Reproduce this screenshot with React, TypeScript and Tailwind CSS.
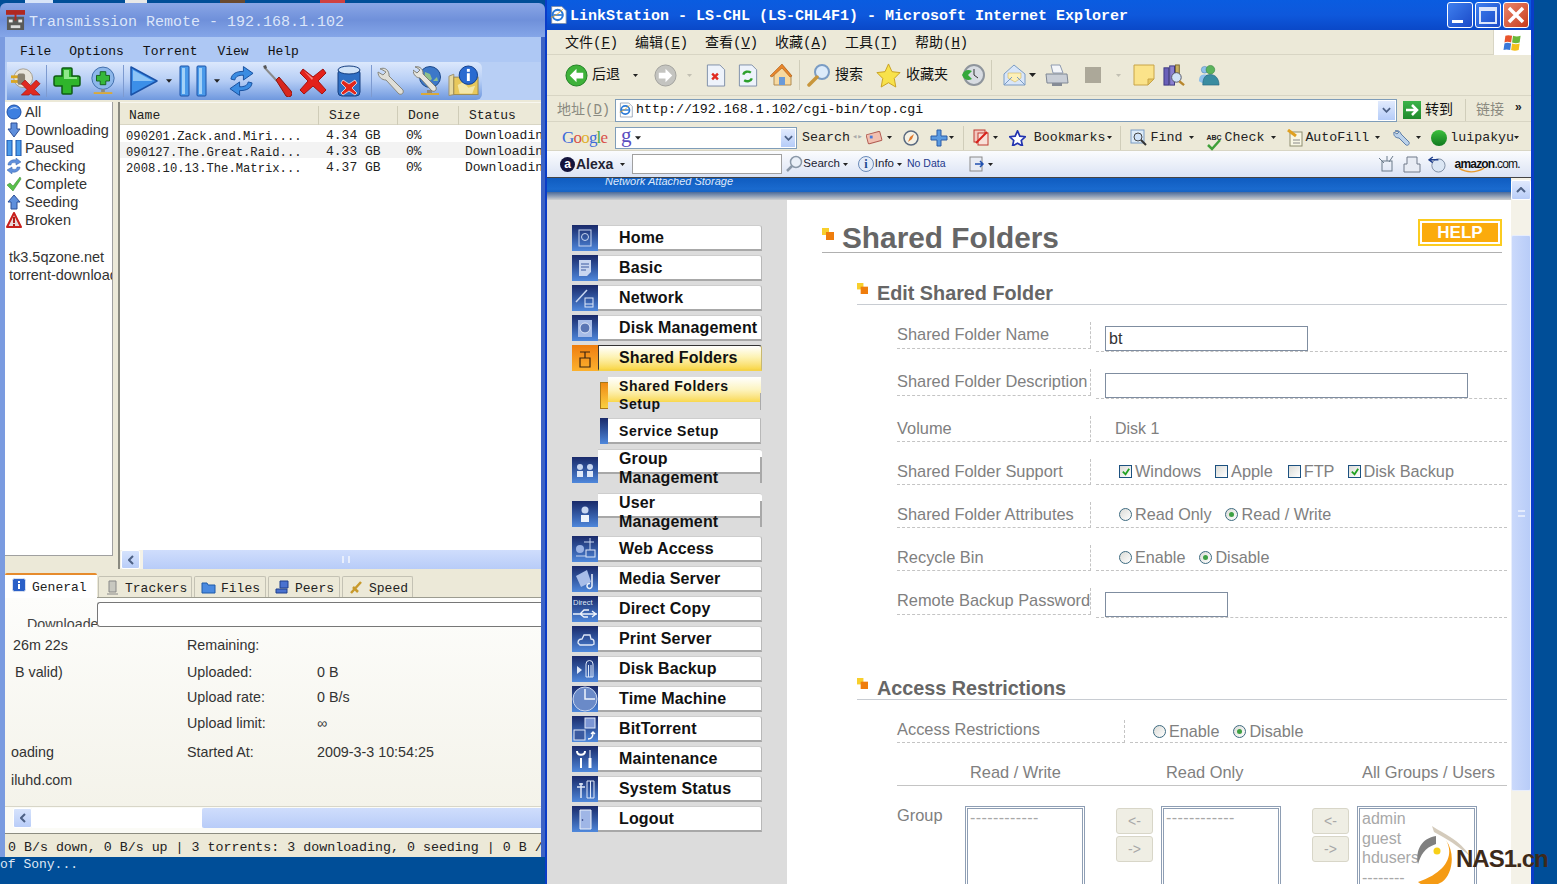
import React from 'react';

const MONO = "font-['Liberation_Mono','Noto_Sans_CJK_SC',monospace]";
const SANS = "font-['Liberation_Sans',sans-serif]";

type P = { className?: string };

// ---- left window toolbar icons ----
const Disconnect = ({ className }: P) => (
  <svg viewBox="0 0 34 32" className={className}>
    <circle cx="14" cy="13" r="10" fill="#e8e4da" stroke="#a39c8c" />
    <rect x="1" y="10" width="9" height="3" fill="#d9a520" />
    <rect x="1" y="15" width="9" height="3" fill="#d9a520" />
    <rect x="8" y="8" width="8" height="12" rx="2" fill="#8a8271" />
    <path d="M16 18l6 6 6-6 4 4-6 6 6 6h-8l-2-2-2 2h-8l6-6-6-6z" fill="#e02a20" stroke="#9c1410" strokeWidth="0.7" transform="translate(0 -3)" />
  </svg>
);
const GreenPlus = ({ className }: P) => (
  <svg viewBox="0 0 28 30" className={className}>
    <path d="M10 2h8a1 1 0 0 1 1 1v7h6a2 2 0 0 1 2 2v6a2 2 0 0 1-2 2h-6v7a1 1 0 0 1-1 1h-8a1 1 0 0 1-1-1v-7H3a2 2 0 0 1-2-2v-6a2 2 0 0 1 2-2h6V3a1 1 0 0 1 1-1z" fill="#2fb52b" stroke="#0f5c14" strokeWidth="1.5" />
    <path d="M11 4h5v7h8v2H11z" fill="#8fe88a" />
  </svg>
);
const GlobePlus = ({ className }: P) => (
  <svg viewBox="0 0 28 32" className={className}>
    <circle cx="14" cy="13" r="12" fill="#8db7ea" stroke="#3d6aa8" />
    <path d="M11 6h6v4h4v6h-4v4h-6v-4H7v-6h4z" fill="#36b83a" stroke="#125f18" />
    <rect x="12" y="25" width="4" height="3" fill="#8a8a80" />
    <rect x="4" y="28" width="20" height="2" fill="#d9a93a" />
  </svg>
);
const Play = ({ className }: P) => (
  <svg viewBox="0 0 28 32" className={className}>
    <path d="M1 2l26 14L1 30z" fill="#3c8fe8" stroke="#1a52a8" strokeWidth="1.5" strokeLinejoin="round" />
    <path d="M3 5l20 11L3 16z" fill="#8cc4f6" />
  </svg>
);
const Pause = ({ className }: P) => (
  <svg viewBox="0 0 28 32" className={className}>
    <rect x="1" y="1" width="9" height="30" rx="1" fill="#4a9aea" stroke="#1a52a8" />
    <rect x="18" y="1" width="9" height="30" rx="1" fill="#4a9aea" stroke="#1a52a8" />
    <rect x="3" y="3" width="3" height="26" fill="#a3d2f8" />
    <rect x="20" y="3" width="3" height="26" fill="#a3d2f8" />
  </svg>
);
const Refresh = ({ className }: P) => (
  <svg viewBox="0 0 26 32" className={className}>
    <path d="M2 14C3 8 8 6 15 6V1l10 7-10 7v-5c-5 0-8 1-9 5z" fill="#3a8ce2" stroke="#174f9e" strokeLinejoin="round" />
    <path d="M24 18c-1 6-6 8-13 8v5L1 24l10-7v5c5 0 8-1 9-5z" fill="#3a8ce2" stroke="#174f9e" strokeLinejoin="round" />
  </svg>
);
const Screwdriver = ({ className }: P) => (
  <svg viewBox="0 0 30 32" className={className}>
    <path d="M2 2l13 14" stroke="#8a8a8a" strokeWidth="2" />
    <path d="M1 1l3-1 1 3-2 1z" fill="#555" />
    <path d="M14 15l3-3 12 14a3.5 3.5 0 0 1-5 5z" fill="#d8281e" stroke="#8a1510" />
  </svg>
);
const RedX = ({ className }: P) => (
  <svg viewBox="0 0 28 30" className={className}>
    <path d="M4 3l10 8 10-8 3 4-8 8 8 9-4 4-9-8-9 8-4-4 8-9-8-8z" fill="#e3211a" stroke="#a01512" strokeLinejoin="round" />
    <path d="M5 5l9 7 -1 2z" fill="#f7847e" />
  </svg>
);
const TrashBlue = ({ className }: P) => (
  <svg viewBox="0 0 24 32" className={className}>
    <rect x="1" y="4" width="22" height="27" rx="4" fill="#2f6fc4" stroke="#163f80" />
    <ellipse cx="12" cy="5" rx="11" ry="4" fill="#cfe2f8" stroke="#163f80" />
    <path d="M6 15l6 4 6-4 2 3-5 5 5 5-2 2-6-4-6 4-2-2 5-5-5-5z" fill="#e3261c" stroke="#fff" strokeWidth="0.7" />
  </svg>
);
const Wrench = ({ className }: P) => (
  <svg viewBox="0 0 28 30" className={className}>
    <path d="M3 3c4-2 8 0 9 5l0 2 14 14c1 3-1 5-4 4L9 14C5 14 1 11 1 6l5 3 3-3-5-3z" fill="#e0dfd8" stroke="#87877e" />
  </svg>
);
const GlobeWrench = ({ className }: P) => (
  <svg viewBox="0 0 28 32" className={className}>
    <circle cx="17" cy="12" r="10.5" fill="#3d78c8" stroke="#1d4a8c" />
    <path d="M12 7l5 2 2 5-4 3-4-3zM20 16l4-4 1 4z" fill="#8fc08a" />
    <rect x="14" y="25" width="5" height="3" fill="#888" />
    <rect x="8" y="28" width="18" height="2" fill="#d9a93a" />
    <path d="M2 2c4-1 7 1 8 5l0 2 13 13c1 3-1 5-4 4L7 13C4 13 0 10 0 5l4 3 3-3-4-3z" fill="#e6e5de" stroke="#7e7e75" />
  </svg>
);
const InfoMap = ({ className }: P) => (
  <svg viewBox="0 0 32 32" className={className}>
    <path d="M1 11l5-2v21l-5 1z" fill="#e6d9a0" stroke="#9c9170" />
    <rect x="6" y="12" width="25" height="18" fill="#e8c85c" stroke="#9c8a50" />
    <path d="M10 20l6-3 5 6 7-2-3 8H12z" fill="#f3e7aa" />
    <circle cx="21" cy="10" r="9.5" fill="#2a6ad0" stroke="#123f8c" />
    <rect x="19.5" y="3.5" width="3" height="3" fill="#fff" />
    <rect x="19.5" y="8" width="3" height="8" fill="#fff" />
  </svg>
);
const TinyArrow = ({ className }: P) => (
  <svg viewBox="0 0 7 4" className={className}>
    <path d="M0 0h7L3.5 4z" fill="#222" />
  </svg>
);

// ---- filter list icons ----
const FAll = () => (
  <svg viewBox="0 0 16 16" className="w-[16px] h-[16px]"><circle cx="8" cy="8" r="7" fill="#3d7fe0" stroke="#1d4fa6" /><path d="M3 6c2-3 7-4 10-1-3-1-7-1-10 1z" fill="#d8e8fb" /></svg>
);
const FDown = () => (
  <svg viewBox="0 0 16 16" className="w-[16px] h-[16px]"><path d="M5 1h6v6h3l-6 8-6-8h3z" fill="#5f8fdc" stroke="#2d4f96" /></svg>
);
const FPause = () => (
  <svg viewBox="0 0 16 16" className="w-[16px] h-[16px]"><rect x="1" y="0" width="5" height="16" fill="#4a9aea" stroke="#1a52a8" /><rect x="10" y="0" width="5" height="16" fill="#4a9aea" stroke="#1a52a8" /></svg>
);
const FCheck = () => (
  <svg viewBox="0 0 16 16" className="w-[16px] h-[16px]"><path d="M2 7c0-4 5-6 8-5V0l5 4-5 3V5C7 4 5 5 5 7zM14 9c0 4-5 6-8 5v2l-5-4 5-3v2c3 1 5 0 5-2z" fill="#5f8fdc" stroke="#3a66ad" strokeWidth="0.5" /></svg>
);
const FOk = () => (
  <svg viewBox="0 0 16 16" className="w-[16px] h-[16px]"><path d="M1 9l3-2 3 3 7-9 1 2-8 12z" fill="#58c04a" stroke="#2f7f28" strokeWidth="0.5" /></svg>
);
const FUp = () => (
  <svg viewBox="0 0 16 16" className="w-[16px] h-[16px]"><path d="M8 1l6 7h-3v7H5V8H2z" fill="#5f8fdc" stroke="#2d4f96" /></svg>
);
const FBroken = () => (
  <svg viewBox="0 0 16 16" className="w-[16px] h-[16px]"><path d="M8 1l7 14H1z" fill="#e8d8d8" stroke="#c8201c" strokeWidth="2" strokeLinejoin="round" /><rect x="7" y="5" width="2" height="6" fill="#b01c18" /><rect x="7" y="12" width="2" height="2" fill="#b01c18" /></svg>
);

// ---- ie toolbar icons ----
const XpBtn = ({ dir, gray }: { dir: 'l' | 'r'; gray?: boolean }) => (
  <svg viewBox="0 0 24 24" className="w-[23px] h-[23px]">
    <circle cx="12" cy="12" r="11" fill={gray ? '#c4c4c0' : '#3fb23a'} stroke={gray ? '#a0a09c' : '#1f7f22'} />
    <path d={dir === 'l' ? 'M12 5l-7 7 7 7v-4h7V9h-7z' : 'M12 5l7 7-7 7v-4H5V9h7z'} fill="#fff" />
  </svg>
);
const PageIcon = ({ children }: { children: React.ReactNode }) => (
  <svg viewBox="0 0 20 24" className="w-[20px] h-[23px]">
    <path d="M1 1h13l5 5v17H1z" fill="#eef3fb" stroke="#7d8ea8" />
    {children}
  </svg>
);
const Home = () => (
  <svg viewBox="0 0 24 24" className="w-[24px] h-[24px]">
    <path d="M3 12L13 2l9 10v10H5V12z" fill="#f7d9a0" stroke="#b08a50" />
    <path d="M1 13L13 1l10 12-2 1-8-9-10 9z" fill="#e8862c" stroke="#a85a14" strokeWidth="0.6" />
    <rect x="10" y="14" width="6" height="8" fill="#6a9ad8" />
  </svg>
);
const Magnifier = () => (
  <svg viewBox="0 0 24 24" className="w-[24px] h-[24px]">
    <circle cx="15" cy="9" r="7" fill="#dcebfa" stroke="#7a9cc4" strokeWidth="2" />
    <path d="M10 14l-8 8" stroke="#c8963c" strokeWidth="3.5" strokeLinecap="round" />
  </svg>
);
const Star = () => (
  <svg viewBox="0 0 26 26" className="w-[25px] h-[25px]">
    <path d="M13 1l3.6 8 8.4 1-6 6 1.6 9L13 20.5 5.400 25 7 16l-6-6 8.400-1z" fill="#f8e24a" stroke="#c8a020" />
  </svg>
);
const History = () => (
  <svg viewBox="0 0 24 24" className="w-[24px] h-[24px]">
    <circle cx="13" cy="12" r="10" fill="#d8dce2" stroke="#8f959c" strokeWidth="2" />
    <path d="M13 6v6l4 3" stroke="#333" fill="none" />
    <path d="M1 12c2-5 6-6 10-4l-4 4 4 4c-4 2-8 1-10-4z" fill="#35a83a" />
  </svg>
);
const Mail = () => (
  <svg viewBox="0 0 23 24" className="w-[23px] h-[24px]">
    <path d="M1 11l10-9 11 9v11H1z" fill="#d9e6f8" stroke="#7a9cc4" />
    <path d="M5 10h13v5l-6 4-7-4z" fill="#fdf0b8" stroke="#c8a84a" strokeWidth="0.5" />
    <path d="M1 22l8-8M22 22l-8-8" stroke="#7a9cc4" />
  </svg>
);
const Printer = () => (
  <svg viewBox="0 0 24 24" className="w-[24px] h-[24px]">
    <path d="M6 2h9l3 8H8z" fill="#f4f6fa" stroke="#8e9ab0" />
    <path d="M1 11h21l1 9H2z" fill="#c9ced6" stroke="#7f8794" />
    <rect x="7" y="20" width="10" height="3" fill="#868c96" />
  </svg>
);
const Note = () => (
  <svg viewBox="0 0 22 22" className="w-[22px] h-[22px]">
    <path d="M1 1h20v14l-6 6H1z" fill="#fbe38a" stroke="#c8a448" />
    <path d="M21 15h-6v6z" fill="#e8c860" stroke="#c8a448" />
  </svg>
);
const Research = () => (
  <svg viewBox="0 0 24 24" className="w-[23px] h-[23px]">
    <rect x="1" y="4" width="5" height="18" fill="#6a60b8" stroke="#3d3780" />
    <rect x="7" y="2" width="5" height="20" fill="#8a80d0" stroke="#3d3780" />
    <rect x="13" y="1" width="4" height="14" fill="#c8b060" stroke="#7a6830" />
    <circle cx="14" cy="14" r="5" fill="#cfe2f8" stroke="#556" />
    <path d="M17 18l5 4" stroke="#b8862c" strokeWidth="2.5" />
  </svg>
);
const Messenger = () => (
  <svg viewBox="0 0 24 24" className="w-[23px] h-[23px]">
    <circle cx="8" cy="6" r="3.500" fill="#8fc0ea" stroke="#4f84b4" strokeWidth="0.6" />
    <path d="M2 18c0-6 3-7 6-7s5 2 5 5l-7 4z" fill="#8fc0ea" />
    <circle cx="14" cy="6" r="4.500" fill="#5cb45c" stroke="#2f7f3c" strokeWidth="0.6" />
    <path d="M6 22c0-8 3-11 8-11s9 4 9 11z" fill="#3a8ca0" stroke="#1f5f78" strokeWidth="0.6" />
  </svg>
);
const IeLogo = ({ className }: P) => (
  <svg viewBox="0 0 20 22" className={className}>
    <path d="M2 1h12l5 5v15H2z" fill="#fff" stroke="#7d8ea8" />
    <circle cx="9" cy="11" r="6" fill="none" stroke="#2a7ad8" strokeWidth="2.500" />
    <path d="M4 11h10" stroke="#2a7ad8" strokeWidth="2" />
    <path d="M1 14c4-1 11-6 14-10" stroke="#e0a020" strokeWidth="1" fill="none" />
  </svg>
);
const WinFlag = () => (
  <svg viewBox="0 0 20 20" className="w-[20px] h-[19px]">
    <path d="M2 3c2-1 4-1 7 0l-1 7c-3-1-5-1-7 0z" fill="#e8542c" />
    <path d="M10 3c3 1 5 1 8 0l-1 7c-3 1-5 1-8 0z" fill="#6ab83a" />
    <path d="M1 11c2-1 4-1 7 0l-1 7c-3-1-5-1-7 0z" fill="#3a78d8" />
    <path d="M9 11c3 1 5 1 8 0l-1 7c-3 1-5 1-8 0z" fill="#f4c01c" />
  </svg>
);
const DropBtn = ({ className }: P) => (
  <div className={`flex items-center justify-center bg-linear-to-b from-[#e2ebfd] to-[#b5ccf8] border border-white ${className}`}>
    <svg viewBox="0 0 10 6" className="w-[9px] h-[6px]"><path d="M1 1l4 4 4-4" fill="none" stroke="#4d6185" strokeWidth="2" /></svg>
  </div>
);

// ---- nav glyphs ----
const navGlyphs: Record<string, React.ReactNode> = {
  Home: <><rect x="7" y="5" width="12" height="16" fill="none" stroke="#c8d6f0" /><circle cx="13" cy="12" r="3.500" fill="none" stroke="#c8d6f0" /></>,
  Basic: <><path d="M7 5h12v12l-4 4H7z" fill="#c8d6f0" /><path d="M9 9h8M9 12h8M9 15h5" stroke="#3a5aa0" /></>,
  Network: <><path d="M4 17L15 5" stroke="#c8d6f0" strokeWidth="1.500" /><rect x="13" y="13" width="8" height="9" fill="none" stroke="#dfe8f8" /><path d="M13 19h8" stroke="#dfe8f8" /></>,
  'Disk Management': <><rect x="6" y="5" width="14" height="17" fill="#a8bde8" /><circle cx="13" cy="13" r="5" fill="#5a76b4" stroke="#dfe8f8" /></>,
  'Shared Folders': <><path d="M8 7h10M13 7v6M8 13h10v9H8z" fill="none" stroke="#3a2410" strokeWidth="1.200" /></>,
  'Group Management': <><circle cx="8" cy="10" r="3" fill="#c8d6f0" /><circle cx="18" cy="10" r="3" fill="#c8d6f0" /><path d="M5 20v-6h6v6zM15 20v-6h6v6z" fill="#dfe8f8" /></>,
  'User Management': <><circle cx="13" cy="9" r="3.500" fill="#c8d6f0" /><path d="M9 21v-7h8v7z" fill="#eef3fb" /></>,
  'Web Access': <><circle cx="8" cy="13" r="4" fill="#9ab2e4" /><rect x="14" y="14" width="9" height="7" fill="none" stroke="#dfe8f8" /><path d="M4 20h10M18 2v12M12 6h10" stroke="#c8d6f0" /></>,
  'Media Server': <><path d="M4 10l11-6 4 12-10 5z" fill="#a8bde8" /><path d="M20 8v12a2.500 2.500 0 1 1-2-2.500" fill="none" stroke="#eef3fb" strokeWidth="1.500" /></>,
  'Direct Copy': <><text x="1" y="9" fontSize="7.500" fill="#dfe8f8" fontFamily="Liberation Sans">Direct</text><path d="M1 18h24M20 15l4 3-4 3M8 18l4-4h5M8 18l4 3h4" fill="none" stroke="#eef3fb" strokeWidth="1.300" /></>,
  'Print Server': <><path d="M6 17c0-3 2-4 4-4l2-4h6l1 4c2 0 3 1 3 3v2l-2 1H8z" fill="none" stroke="#dfe8f8" strokeWidth="1.300" /></>,
  'Disk Backup': <><path d="M5 10l5 4-5 4z" fill="#dfe8f8" /><path d="M14 21V8a3 3 0 0 1 7 0v13zM16.500 9v12M19 9v12" fill="none" stroke="#dfe8f8" /></>,
  'Time Machine': <><circle cx="13" cy="13" r="12" fill="#6a8ac8" stroke="#c8d6f0" /><path d="M13 3v10h10" fill="none" stroke="#eef3fb" strokeWidth="1.500" /></>,
  BitTorrent: <><rect x="13" y="2" width="10" height="10" fill="#7c96d4" stroke="#dfe8f8" /><rect x="2" y="14" width="11" height="10" fill="#3a5aa0" stroke="#dfe8f8" /><path d="M16 23c4 0 5-2 5-6M19 18l2-2 2 2" fill="none" stroke="#fff" strokeWidth="1.300" /></>,
  Maintenance: <><path d="M9 12v10M5 5c0 5 8 5 8 0" fill="none" stroke="#fff" strokeWidth="2" /><path d="M18 4v8" stroke="#fff" /><path d="M18 12v10" stroke="#fff" strokeWidth="3" /></>,
  'System Status': <><path d="M5 11h8M9 7v15M7 8h4" stroke="#dfe8f8" strokeWidth="1.500" /><path d="M15 5h7v17h-7zM18.500 5v17" fill="none" stroke="#dfe8f8" /></>,
  Logout: <><path d="M8 4h11v19H8z" fill="#9fb6e6" stroke="#eef3fb" /><circle cx="10.500" cy="14" r="0.800" fill="#1c2c6e" /></>,
};

const NavItem = ({ label, active, wrap }: { label: string; active?: boolean; wrap?: boolean }) => (
  <div className={`flex ${wrap ? 'h-[34px]' : 'h-[26px]'}`}>
    <div className={`w-[26px] h-[26px] shrink-0 ${wrap ? 'mt-[8px]' : ''} ${active ? 'bg-linear-to-b from-[#ef7d0c] to-[#fbb12e]' : 'bg-linear-to-b from-[#1a2a6a] to-[#4f88dc]'}`}>
      <svg viewBox="0 0 26 26" className="w-[26px] h-[26px]">{navGlyphs[label]}</svg>
    </div>
    {wrap ? (
      <div className="relative w-[164px] h-[34px] ml-[0px]">
        <div className="h-[25px] bg-white border-t border-t-[#cdcdcd] border-b-2 border-b-[#a8a8a8] rounded-tr-[3px]" />
        <div className="absolute right-0 top-[8px] h-[26px] border-r-2 border-r-[#a8a8a8]" />
        <div className={`absolute top-0 left-[21px] text-[16px] leading-[19px] font-bold text-[#111] tracking-[0.15px] ${SANS}`}>{label.split(' ').map(w => <div key={w}>{w}</div>)}</div>
      </div>
    ) : (
      <div className={`w-[164px] h-[26px] flex items-center text-[16px] font-bold text-[#111] tracking-[0.15px] ${SANS} rounded-tr-[3px] border-t border-b-2 border-r ${active ? 'pl-[20px] bg-linear-to-b from-white via-[#fdf2b0] to-[#f9d84a] border-t-[#333] border-l border-l-[#333] border-b-[#f5d34a] border-r-[#c8b870]' : 'pl-[21px] bg-white border-t-[#cdcdcd] border-b-[#a8a8a8] border-r-[#b8b8b8]'}`}>
        {label}
      </div>
    )}
  </div>
);

const FormRow = ({ label, tall, children }: { label: string; tall?: boolean; children: React.ReactNode }) => (
  <div className="flex items-start">
    <div className={`w-[194px] border-b border-dashed border-b-[#c4c4c4] relative text-[#808080] text-[16.400px] leading-[24px] whitespace-nowrap ${tall ? 'h-[27px]' : 'h-[26px]'}`}>
      {label}
      <div className="absolute right-0 top-0 h-[26px] border-r border-dashed border-r-[#c4c4c4]" />
    </div>
    <div className={`ml-[5px] flex-1 border-b border-dashed border-b-[#c4c4c4] flex ${tall ? 'h-[30px] items-start pt-[4px]' : 'h-[26px] items-center'}`}>
      {children}
    </div>
  </div>
);

const Check = ({ on }: { on?: boolean }) => (
  <div className="w-[13px] h-[13px] border border-[#1c5180] bg-linear-to-br from-[#dcdcd7] to-white flex items-center justify-center">
    {on && <svg viewBox="0 0 11 11" className="w-[10px] h-[10px]"><path d="M2 5l3 3 4-6" fill="none" stroke="#21a121" strokeWidth="2" /></svg>}
  </div>
);
const Radio = ({ on }: { on?: boolean }) => (
  <div className="w-[13px] h-[13px] rounded-full border border-[#3d6a80] bg-linear-to-br from-[#dcdcd7] to-white flex items-center justify-center">
    {on && <div className="w-[5px] h-[5px] rounded-full bg-[#3ea043]" />}
  </div>
);

const Bullet = ({ className }: P) => (
  <svg viewBox="0 0 12 12" className={className}>
    <rect x="0" y="0" width="7" height="7" fill="#f8cf2c" />
    <rect x="4" y="4" width="8" height="8" fill="#ef7d0c" />
  </svg>
);

const PageSelect = ({ items }: { items?: string[] }) => (
  <div className="w-[120px] h-[110px] border-[3px] border-[#8e9eb4] border-double bg-white pl-[2px] text-[16px] leading-[19.500px] text-[#a8a8a8] shrink-0">
    {items ? items.map(i => <div key={i}>{i}</div>) : <div className="tracking-[0.4px] leading-[18px]">------------</div>}
  </div>
);
const MoveBtns = () => (
  <div className="flex flex-col gap-[2px] mt-[2px] w-[37px] shrink-0">
    {['<-', '->'].map(t => (
      <div key={t} className="h-[26px] rounded-[3px] bg-[#efeee4] border border-[#d8d6c8] flex items-center justify-center text-[14px] text-[#a8a8a8]">{t}</div>
    ))}
  </div>
);

const filters: [string, React.ReactNode][] = [
  ['All', <FAll />],
  ['Downloading', <FDown />],
  ['Paused', <FPause />],
  ['Checking', <FCheck />],
  ['Complete', <FOk />],
  ['Seeding', <FUp />],
  ['Broken', <FBroken />],
];

const rows = [
  ['090201.Zack.and.Miri....', '4.34 GB', '0%', 'Downloading'],
  ['090127.The.Great.Raid...', '4.33 GB', '0%', 'Downloading'],
  ['2008.10.13.The.Matrix...', '4.37 GB', '0%', 'Downloading'],
];

const infoRows = [
  ['h-[32px]', 'ml-[2px]', '26m 22s', 'Remaining:', ''],
  ['h-[22px]', 'ml-[4px]', 'B valid)', 'Uploaded:', '0 B'],
  ['h-[28px]', '', '', 'Upload rate:', '0 B/s'],
  ['h-[24px]', '', '', 'Upload limit:', '∞'],
  ['h-[34px]', '', 'oading', 'Started At:', '2009-3-3 10:54:25'],
  ['h-[22px]', '', 'iluhd.com', '', ''],
];

const TransmissionWindow = () => (
  <div className="absolute left-0 top-[3px] w-[545px] h-[854px] flex flex-col overflow-hidden rounded-t-[6px]">
    <div className={`h-[34px] shrink-0 flex items-center pl-[6px] bg-linear-to-b from-[#8aa6e6] via-[#6f90da] to-[#85a6e8] text-[#dce6fa] text-[15px] ${MONO}`}>
      <svg viewBox="0 0 20 22" className="w-[19px] h-[21px] mr-[4px]">
        <rect x="1" y="7" width="18" height="14" fill="#5a5a58" />
        <rect x="0" y="0" width="20" height="5" fill="#b02820" />
        <rect x="9" y="3" width="2" height="8" fill="#b02820" />
        <rect x="3" y="10" width="4" height="3" fill="#eee" />
        <rect x="13" y="10" width="4" height="3" fill="#eee" />
        <rect x="5" y="16" width="10" height="3" fill="#ddd" />
      </svg>
      <span className="pt-[7px]">Transmission Remote - 192.168.1.102</span>
    </div>
    <div className="flex-1 flex flex-col border-l-[5px] border-l-[#7a9be0] border-r-[4px] border-r-[#3d63c4] bg-[#ece9d8] min-h-0">
      <div className={`h-[25px] shrink-0 flex items-center pt-[4px] bg-[#aec8f4] text-[#111] text-[13px] ${MONO}`}>
        <span className="ml-[15px]">File</span>
        <span className="ml-[18px]">Options</span>
        <span className="ml-[19px]">Torrent</span>
        <span className="ml-[20px]">View</span>
        <span className="ml-[19px]">Help</span>
      </div>
      <div className="h-[38px] shrink-0 bg-[#b8cff5]">
        <div className="flex items-center h-[38px] w-[475px] ml-[2px] rounded-r-[6px] bg-linear-to-b from-[#dce8fc] via-[#b5cdf5] to-[#6f98de]">
          <Disconnect className="w-[32px] h-[30px] ml-[3px]" />
          <div className="w-px h-[32px] bg-[#7d9ad0] ml-[4px]" />
          <GreenPlus className="w-[28px] h-[30px] ml-[6px]" />
          <GlobePlus className="w-[26px] h-[32px] ml-[9px]" />
          <div className="w-px h-[32px] bg-[#7d9ad0] ml-[7px]" />
          <Play className="w-[28px] h-[32px] ml-[6px]" />
          <TinyArrow className="w-[6px] h-[4px] ml-[8px]" />
          <Pause className="w-[28px] h-[32px] ml-[7px]" />
          <TinyArrow className="w-[6px] h-[4px] ml-[7px]" />
          <Refresh className="w-[25px] h-[32px] ml-[9px]" />
          <Screwdriver className="w-[30px] h-[32px] ml-[8px]" />
          <RedX className="w-[28px] h-[30px] ml-[7px]" />
          <TrashBlue className="w-[24px] h-[32px] ml-[10px]" />
          <div className="w-px h-[32px] bg-[#7d9ad0] ml-[10px]" />
          <Wrench className="w-[28px] h-[30px] ml-[5px]" />
          <GlobeWrench className="w-[28px] h-[32px] ml-[8px]" />
          <InfoMap className="w-[31px] h-[32px] ml-[7px]" />
        </div>
      </div>

      {/* filters and torrent list */}
      <div className="h-[473px] shrink-0 flex">
        <div className={`w-[108px] h-[454px] mt-[2px] bg-white border-r border-b border-r-[#a0a0a0] border-b-[#a0a0a0] overflow-hidden text-[14.500px] leading-[18px] text-[#333] ${SANS}`}>
          {filters.map(([name, icon]) => (
            <div key={name} className="flex items-center h-[18px] gap-[3px] pl-[1px] whitespace-nowrap first:mt-px">
              {icon}
              {name}
            </div>
          ))}
          <div className="mt-[19px] pl-[4px] whitespace-nowrap">tk3.5qzone.net</div>
          <div className="pl-[4px] whitespace-nowrap">torrent-download</div>
        </div>
        <div className="ml-[5px] flex-1 h-[467px] mt-[2px] flex flex-col border-l-2 border-l-[#8a8a80] bg-white min-w-0 overflow-hidden">
          <div className={`h-[23px] shrink-0 flex items-center pt-[4px] bg-[#ece9d8] border-t border-t-[#f8f7f0] border-b border-b-[#d8d5c4] text-[#222] text-[13px] ${MONO}`}>
            <div className="w-[199px] pl-[9px] border-r border-r-[#cfccb8]">Name</div>
            <div className="w-[79px] pl-[10px] border-r border-r-[#cfccb8]">Size</div>
            <div className="w-[61px] pl-[10px] border-r border-r-[#cfccb8]">Done</div>
            <div className="pl-[10px]">Status</div>
          </div>
          <div className="flex-1 pt-[1px]">
            {rows.map((r, i) => (
              <div key={r[0]} className={`h-[16px] flex items-center pt-[3px] text-[13px] whitespace-nowrap text-[#222] ${MONO} ${i === 1 ? 'bg-[#f3f3f3]' : ''}`}>
                <div className="w-[206px] pl-[6px] pt-[3px] shrink-0 text-[12.200px]">{r[0]}</div>
                <div className="w-[80px] shrink-0">{r[1]}</div>
                <div className="w-[59px] shrink-0">{r[2]}</div>
                <div>{r[3]}</div>
              </div>
            ))}
          </div>
          <div className="h-[19px] shrink-0 flex bg-[#f4f2e8]">
            <div className="w-[19px] ml-px h-[19px] rounded-[2px] bg-linear-to-b from-[#d6e3fc] to-[#b9cdf8] border border-white flex items-center justify-center">
              <svg viewBox="0 0 6 10" className="w-[6px] h-[10px]"><path d="M5 1L1 5l4 4" fill="none" stroke="#4d6185" strokeWidth="2" /></svg>
            </div>
            <div className="ml-[3px] flex-1 bg-linear-to-b from-[#cfddfc] to-[#b8ccf8] flex items-center justify-center pl-[8px]">
              <div className="w-[8px] h-[7px] border-x-2 border-x-[#e8eefc]" />
            </div>
          </div>
        </div>
      </div>

      {/* tabs */}
      <div className={`h-[25px] shrink-0 flex items-end border-b border-b-[#9c9c90] text-[13px] text-[#222] ${MONO}`}>
        <div className="w-[92px] h-[25px] bg-white border-t-2 border-t-[#e68b2c] flex items-start pt-[3px] pl-[7px] gap-[6px] rounded-t-[2px] mb-[-1px]">
          <svg viewBox="0 0 14 14" className="w-[14px] h-[14px]"><rect x="0.500" y="0.500" width="13" height="13" rx="2" fill="#2a60c8" stroke="#d8e0f0" /><rect x="6" y="3" width="2" height="2" fill="#fff" /><rect x="6" y="6" width="2" height="5" fill="#fff" /></svg>
          General
        </div>
        {[
          ['Trackers', 'w-[94px] ml-px', <path key="t" d="M4 1h7v11H4zM2 14h11" fill="#c8c8c0" stroke="#888" />],
          ['Files', 'w-[72px] ml-[2px]', <path key="f" d="M1 3h5l1 2h7v8H1z" fill="#4a8ae0" stroke="#1f5aa8" />],
          ['Peers', 'w-[72px] ml-[2px]', <path key="p" d="M5 1h8v7H5zM1 9h11v4H1z" fill="#4a72d0" stroke="#20408c" />],
          ['Speed', 'w-[71px] ml-[2px]', <path key="s" d="M2 13L12 2M4 7l5 5" stroke="#c89a2c" strokeWidth="2.500" fill="none" />],
        ].map(([name, w, glyph]) => (
          <div key={name as string} className={`${w as string} h-[21px] bg-[#ece9d8] border border-b-0 border-[#c4c2b4] rounded-t-[2px] flex items-center pl-[6px] gap-[5px]`}>
            <svg viewBox="0 0 15 15" className="w-[15px] h-[15px]">{glyph}</svg>
            <span className="pt-[3px]">{name as string}</span>
          </div>
        ))}
      </div>

      {/* general tab */}
      <div className={`h-[208px] shrink-0 bg-linear-to-b from-[#fdfdfb] to-[#f4f3ea] overflow-hidden text-[14.300px] text-[#333] ${SANS}`}>
        <div className="flex h-[29px] items-start">
          <div className="w-[92px] h-[29px] overflow-hidden whitespace-nowrap text-[#444] pt-[16px] leading-[20px] pl-[22px]">Downloaded:</div>
          <div className="flex-1 h-[25px] mt-[4px] bg-white border border-[#777] border-r-0 rounded-l-[3px]" />
        </div>
        <div className="pl-[6px] pt-[3px]">
          {infoRows.map(([h, m, a, b, c]) => (
            <div key={b + a} className={`flex items-center ${h}`}>
              <div className="w-[176px] shrink-0"><span className={m}>{a}</span></div>
              <div className="w-[130px] shrink-0">{b}</div>
              <div>{c}</div>
            </div>
          ))}
        </div>
      </div>
      <div className="h-[27px] shrink-0 flex border-t border-t-[#d8d6c8] pt-[1px] pl-[8px] bg-[#fbfbf6]">
        <div className="w-[19px] h-[20px] rounded-[2px] bg-linear-to-b from-[#d6e3fc] to-[#b9cdf8] border border-white flex items-center justify-center">
          <svg viewBox="0 0 6 10" className="w-[6px] h-[10px]"><path d="M5 1L1 5l4 4" fill="none" stroke="#4d6185" strokeWidth="2" /></svg>
        </div>
        <div className="w-[170px] h-[20px] bg-white" />
        <div className="flex-1 h-[20px] bg-linear-to-b from-[#cfddfc] to-[#b8ccf8] rounded-l-[2px]" />
      </div>
      <div className={`h-[24px] shrink-0 flex items-center pl-[3px] pt-[5px] border-t border-t-[#8c8c80] bg-[#ece9d8] whitespace-nowrap overflow-hidden text-[13.300px] text-[#222] ${MONO}`}>
        0 B/s down, 0 B/s up | 3 torrents: 3 downloading, 0 seeding | 0 B /
      </div>
    </div>
  </div>
);

const IeWindow = () => (
  <div className="absolute left-[545px] top-0 w-[989px] h-[884px] flex flex-col border-l-2 border-r-[3px] border-x-[#0a3cc8] overflow-hidden">
    <div className={`h-[30px] shrink-0 flex items-center pl-[3px] bg-linear-to-b from-[#0a5ce0] via-[#0e58dc] to-[#0a48c8] text-white text-[15px] ${MONO}`}>
      <IeLogo className="w-[17px] h-[20px] mr-[3px]" />
      <span className="font-bold pt-[4px]">LinkStation - LS-CHL (LS-CHL4F1) - Microsoft Internet Explorer</span>
      <div className="ml-auto flex gap-[2px] pr-[2px]">
        <div className="w-[26px] h-[26px] rounded-[3px] border border-white bg-linear-to-br from-[#3f7fee] to-[#1c49c8] flex items-end pl-[4px] pb-[4px]"><div className="w-[11px] h-[3px] bg-white" /></div>
        <div className="w-[26px] h-[26px] rounded-[3px] border border-white bg-linear-to-br from-[#3f7fee] to-[#1c49c8] flex items-center justify-center"><div className="w-[18px] h-[17px] border-2 border-t-[4px] border-[#dce6fb]" /></div>
        <div className="w-[26px] h-[26px] rounded-[3px] border border-white bg-linear-to-br from-[#e8846a] to-[#c83a18] flex items-center justify-center">
          <svg viewBox="0 0 20 20" className="w-[20px] h-[20px]"><path d="M3 3l14 14M17 3L3 17" stroke="#fff" strokeWidth="3.500" /></svg>
        </div>
      </div>
    </div>

    <div className={`h-[25px] shrink-0 flex items-center bg-[#ece9d8] border-b border-b-[#d8d5c4] text-[#111] text-[14px] ${MONO}`}>
      {[['文件', 'F'], ['编辑', 'E'], ['查看', 'V'], ['收藏', 'A'], ['工具', 'T'], ['帮助', 'H']].map(([t, k]) => (
        <span key={k} className="first:ml-[18px] w-[70px] pt-[2px] whitespace-nowrap">{t}(<u>{k}</u>)</span>
      ))}
      <div className="ml-auto w-[38px] h-[25px] bg-white flex items-center justify-center border-l border-l-[#d8d5c4]"><WinFlag /></div>
    </div>

    <div className={`h-[41px] shrink-0 flex items-center bg-[#ece9d8] border-b border-b-[#d8d5c4] text-[14px] text-[#111] ${MONO}`}>
      <div className="ml-[18px]"><XpBtn dir="l" /></div>
      <span className="ml-[4px]">后退</span>
      <TinyArrow className="w-[5px] h-[3px] ml-[13px]" />
      <div className="ml-[16px]"><XpBtn dir="r" gray /></div>
      <TinyArrow className="w-[5px] h-[3px] ml-[10px] opacity-20" />
      <div className="ml-[14px]"><PageIcon><path d="M6 10l6 6M12 10l-6 6" stroke="#e02a20" strokeWidth="2.500" /></PageIcon></div>
      <div className="ml-[12px]"><PageIcon><path d="M5 11c1-3 5-4 8-2M14 15c-1 3-5 4-8 2" fill="none" stroke="#2ca02c" strokeWidth="2.500" /></PageIcon></div>
      <div className="ml-[11px]"><Home /></div>
      <div className="w-px h-[30px] bg-[#d0cdba] ml-[6px]" />
      <div className="ml-[7px]"><Magnifier /></div>
      <span className="ml-[4px]">搜索</span>
      <div className="ml-[13px]"><Star /></div>
      <span className="ml-[5px]">收藏夹</span>
      <div className="ml-[13px]"><History /></div>
      <div className="w-px h-[30px] bg-[#d0cdba] ml-[6px]" />
      <div className="ml-[11px]"><Mail /></div>
      <TinyArrow className="w-[7px] h-[4px] ml-[3px]" />
      <div className="ml-[9px]"><Printer /></div>
      <div className="w-[16px] h-[16px] bg-[#aca899] ml-[16px]" />
      <TinyArrow className="w-[5px] h-[3px] ml-[15px] opacity-20" />
      <div className="ml-[12px]"><Note /></div>
      <div className="ml-[8px]"><Research /></div>
      <div className="ml-[11px]"><Messenger /></div>
    </div>

    <div className={`h-[26px] shrink-0 flex items-center pt-[3px] bg-[#ece9d8] border-b border-b-[#d8d5c4] text-[14px] ${MONO}`}>
      <span className="ml-[10px] w-[58px] text-[#8a8a80] whitespace-nowrap">地址(<u>D</u>)</span>
      <div className="w-[782px] h-[23px] bg-white border border-[#7f9db9] flex items-center">
        <IeLogo className="w-[14px] h-[16px] ml-[3px] mr-[3px]" />
        <span className="text-[13.300px] text-[#111]">http://192.168.1.102/cgi-bin/top.cgi</span>
        <DropBtn className="ml-auto w-[19px] h-[21px]" />
      </div>
      <div className="ml-[6px] w-[18px] h-[18px] bg-linear-to-b from-[#3bb34a] to-[#1f8a2c] flex items-center justify-center">
        <svg viewBox="0 0 14 14" className="w-[14px] h-[14px]"><path d="M1 7h10M7 2l5 5-5 5" fill="none" stroke="#fff" strokeWidth="2.500" /></svg>
      </div>
      <span className="ml-[4px] text-[#111]">转到</span>
      <div className="w-px h-[22px] bg-[#d0cdba] ml-[12px]" />
      <span className="ml-[10px] text-[#8a8a80]">链接</span>
      <span className={`ml-[11px] text-[12px] font-bold text-[#222] leading-[10px] mb-[6px] ${SANS}`}>»</span>
    </div>

    <div className={`h-[29px] shrink-0 flex items-center pt-[3px] bg-[#ece9d8] border-b border-b-[#d8d5c4] whitespace-nowrap text-[13.300px] text-[#222] ${MONO}`}>
      <span className="ml-[15px] w-[53px] text-[17px] tracking-[-0.800px] font-['Liberation_Serif',serif]">
        <span className="text-[#3d6ad8]">G</span><span className="text-[#d8504a]">o</span><span className="text-[#e0b030]">o</span><span className="text-[#3d6ad8]">g</span><span className="text-[#4aa84a]">l</span><span className="text-[#d8504a]">e</span>
      </span>
      <div className="w-[182px] h-[22px] bg-white border border-[#7f9db9] flex items-center">
        <span className="ml-[5px] text-[21px] leading-[18px] pb-[5px] text-[#5a4ec0] font-['Liberation_Serif',serif]">g</span>
        <TinyArrow className="w-[6px] h-[4px] ml-[3px]" />
        <DropBtn className="ml-auto w-[16px] h-[20px]" />
      </div>
      <span className="ml-[5px]">Search</span>
      <span className="ml-[2px] text-[#aaa] text-[9px]">◂▸</span>
      <svg viewBox="0 0 18 16" className="w-[17px] h-[15px] ml-[3px]"><rect x="1" y="3" width="15" height="10" rx="1" fill="#f2c0b0" stroke="#b05a50" transform="rotate(-15 9 8)" /><rect x="4" y="6" width="3" height="3" fill="#4a7ad8" /></svg>
      <TinyArrow className="w-[5px] h-[3px] ml-[4px]" />
      <svg viewBox="0 0 16 16" className="w-[16px] h-[16px] ml-[11px]"><circle cx="8" cy="8" r="7" fill="#f4f1e4" stroke="#5a6a80" strokeWidth="1.500" /><path d="M11 4L7 7 5 12l4-3z" fill="#e07a30" /></svg>
      <svg viewBox="0 0 18 18" className="w-[18px] h-[18px] ml-[11px]"><path d="M7 1h4v6h6v4h-6v6H7v-6H1V7h6z" fill="#5a9ae0" stroke="#2a5ca8" /></svg>
      <TinyArrow className="w-[5px] h-[3px] ml-[1px]" />
      <div className="w-px h-[24px] bg-[#d0cdba] ml-[9px]" />
      <svg viewBox="0 0 16 17" className="w-[16px] h-[17px] ml-[9px]"><rect x="1" y="1" width="11" height="12" fill="#f2c8c0" stroke="#c03a30" /><rect x="5" y="4" width="10" height="12" fill="#f8e0d8" stroke="#c03a30" /><path d="M3 14L14 3" stroke="#d8201a" strokeWidth="2" /></svg>
      <TinyArrow className="w-[5px] h-[3px] ml-[4px]" />
      <svg viewBox="0 0 18 17" className="w-[17px] h-[16px] ml-[11px]"><path d="M9 1l2.500 5.500 6 .6-4.500 4 1.300 5.900L9 14l-5.300 3 1.300-5.900-4.500-4 6-.6z" fill="#fff" stroke="#2233b0" strokeWidth="1.800" /></svg>
      <span className="ml-[8px]">Bookmarks</span>
      <TinyArrow className="w-[5px] h-[3px] ml-[1px]" />
      <div className="w-px h-[24px] bg-[#d0cdba] ml-[8px]" />
      <svg viewBox="0 0 17 17" className="w-[17px] h-[17px] ml-[9px]"><rect x="1" y="1" width="13" height="13" fill="#dcebf8" stroke="#7a9cc4" /><circle cx="8" cy="8" r="4" fill="#cfe2f8" stroke="#444" /><path d="M11 11l5 5" stroke="#333" strokeWidth="2" /></svg>
      <span className="ml-[4px]">Find</span>
      <TinyArrow className="w-[5px] h-[3px] ml-[7px]" />
      <span className={`ml-[12px] w-[16px] relative text-[7px] leading-[7px] font-bold ${SANS}`}>ABC<svg viewBox="0 0 16 12" className="absolute left-0 top-[5px] w-[16px] h-[12px]"><path d="M2 6l4 4 8-9" fill="none" stroke="#3fa03a" strokeWidth="2.500" /></svg></span>
      <span className="ml-[2px]">Check</span>
      <TinyArrow className="w-[5px] h-[3px] ml-[7px]" />
      <svg viewBox="0 0 16 18" className="w-[16px] h-[18px] ml-[11px]"><rect x="3" y="3" width="12" height="14" fill="#f8f6e4" stroke="#8e8e70" /><path d="M1 1l8 6" stroke="#e0a020" strokeWidth="3" /><path d="M6 11h7M6 14h7" stroke="#888" /></svg>
      <span className="ml-[2px]">AutoFill</span>
      <TinyArrow className="w-[5px] h-[3px] ml-[6px]" />
      <svg viewBox="0 0 17 17" className="w-[17px] h-[17px] ml-[13px]"><path d="M2 2c3-1 5 0 6 3l1 1 7 7c1 2-1 4-3 3L6 9C3 9 0 7 1 3l3 2 2-2z" fill="#bcd2ea" stroke="#5e7ea8" /></svg>
      <TinyArrow className="w-[5px] h-[3px] ml-[6px]" />
      <div className="w-[16px] h-[16px] rounded-full bg-linear-to-b from-[#3cc03c] to-[#0f7a1f] ml-[10px]" />
      <span className="ml-[3px]">luipakyu</span>
      <TinyArrow className="w-[5px] h-[3px]" />
    </div>

    <div className={`h-[26px] shrink-0 flex items-center bg-linear-to-b from-[#fbfcfe] to-[#dbe3f4] whitespace-nowrap text-[11.500px] text-[#223] ${SANS}`}>
      <div className="ml-[13px] w-[15px] h-[15px] rounded-full bg-[#14143c] text-white text-[12px] font-bold leading-[14px] text-center">a</div>
      <span className="ml-[1px] text-[14px] font-bold">Alexa</span>
      <TinyArrow className="w-[5px] h-[3px] ml-[7px]" />
      <div className="w-[150px] h-[20px] ml-[7px] bg-white border border-[#a0a0a0]" />
      <svg viewBox="0 0 18 18" className="w-[18px] h-[18px] ml-[3px]"><circle cx="11" cy="7" r="5.500" fill="#eaf0f8" stroke="#8a98a8" strokeWidth="1.500" /><path d="M7 11l-5 5" stroke="#8a98a8" strokeWidth="2.500" /></svg>
      <span>Search</span>
      <TinyArrow className="w-[5px] h-[3px] ml-[3px]" />
      <div className="w-[16px] h-[16px] ml-[10px] rounded-full bg-[#e4ecf8] border border-[#6a8ab8] text-[#1f4a90] text-[12px] font-bold leading-[14px] text-center font-['Liberation_Serif',serif]">i</div>
      <span className="ml-[1px]">Info</span>
      <TinyArrow className="w-[5px] h-[3px] ml-[3px]" />
      <span className="ml-[5px] text-[10.500px] text-[#23388c]">No Data</span>
      <svg viewBox="0 0 16 16" className="w-[16px] h-[16px] ml-[23px]"><rect x="1" y="1" width="12" height="14" fill="#e8ecf4" stroke="#8a8a8a" /><path d="M6 8h8M11 5l3 3-3 3" fill="none" stroke="#2050b0" strokeWidth="1.500" /></svg>
      <TinyArrow className="w-[5px] h-[3px] ml-[3px]" />
      <svg viewBox="0 0 18 18" className="w-[18px] h-[18px] ml-[385px]"><rect x="4" y="6" width="10" height="10" fill="none" stroke="#6a7a8a" /><path d="M1 3l5 5M15 1l-4 6M9 1v5" stroke="#6a7a8a" /></svg>
      <svg viewBox="0 0 18 18" className="w-[18px] h-[18px] ml-[7px]"><path d="M4 2h10v7h3v8H1V9h3z" fill="#e8ecf4" stroke="#707a8a" /></svg>
      <svg viewBox="0 0 20 18" className="w-[19px] h-[17px] ml-[7px]"><circle cx="11" cy="10" r="7" fill="#dbe6f4" stroke="#7a8aa0" /><path d="M1 4h10M5 1L1 4l4 3" fill="none" stroke="#1f3f8c" strokeWidth="1.500" /></svg>
      <span className="ml-[8px] relative text-[12px] font-bold tracking-[-0.800px] text-[#111]">
        amazon<span className="font-normal">.com.</span>
        <svg viewBox="0 0 30 6" className="absolute left-[3px] top-[12px] w-[28px] h-[6px]"><path d="M1 1c8 5 18 5 27 0" fill="none" stroke="#e89a2c" strokeWidth="1.500" /></svg>
      </span>
    </div>

    <div className="flex-1 flex min-h-0 border-t border-t-[#444]">
      <div className="flex-1 flex flex-col min-w-0">
        <div className="h-[22px] shrink-0 relative overflow-hidden bg-linear-to-b from-[#0f5cc0] via-[#1a6ace] to-[#0f4fa8]">
          <span className={`absolute left-[58px] top-[-5px] text-[11px] italic text-[#dce8fa] ${SANS}`}>Network Attached Storage</span>
          <div className="absolute left-0 right-0 bottom-0 h-[8px] bg-linear-to-b from-[#4c6a98] to-[#d0d0d0]" />
        </div>
        <div className={`flex-1 flex min-h-0 overflow-hidden ${SANS}`}>
          <div className="w-[240px] shrink-0 bg-[#dcdcdc] pt-[25px] pl-[25px] flex flex-col gap-[4px]">
            {['Home', 'Basic', 'Network', 'Disk Management'].map(n => <NavItem key={n} label={n} />)}
            <NavItem label="Shared Folders" active />
            <div className="w-[189px] flex flex-col gap-[8px] mt-[2px] mb-[1px] pl-[28px]">
              <div className="flex h-[33px]">
                <div className="w-[8px] h-[27px] mt-[5px] bg-linear-to-b from-[#ef8a10] to-[#f8d040] border-y border-l border-[#a87818]" />
                <div className="relative flex-1 h-[33px]">
                  <div className="h-[25px] bg-linear-to-b from-white via-[#fdf4c0] to-[#f9d84a]" />
                  <div className="absolute right-0 top-[16px] h-[17px] border-r border-r-[#aaa]" />
                  <div className="absolute left-[11px] top-0 text-[14px] leading-[18px] font-bold text-[#111] tracking-[0.55px]">Shared Folders<br />Setup</div>
                </div>
              </div>
              <div className="flex h-[26px]">
                <div className="w-[8px] h-[26px] bg-linear-to-b from-[#1a2a6a] to-[#4f88dc]" />
                <div className="flex-1 bg-white border-t border-t-[#cdcdcd] border-b-2 border-b-[#a8a8a8] border-r border-r-[#b8b8b8] flex items-center pl-[11px] pt-[1px] text-[14px] font-bold text-[#111] tracking-[0.55px]">Service Setup</div>
              </div>
            </div>
            <NavItem label="Group Management" wrap />
            <div className="h-[2px]" />
            <NavItem label="User Management" wrap />
            <div className="h-[1px]" />
            {['Web Access', 'Media Server', 'Direct Copy', 'Print Server', 'Disk Backup', 'Time Machine', 'BitTorrent', 'Maintenance', 'System Status', 'Logout'].map(n => <NavItem key={n} label={n} />)}
          </div>

          <div className="flex-1 bg-white pl-[35px] pr-[4px] pt-[19px] min-w-0">
            <div className="flex items-center h-[34px] mr-[5px] border-b border-b-[#b0b0b0]">
              <Bullet className="w-[12px] h-[12px] mb-[3px]" />
              <span className="ml-[8px] pt-[5px] text-[29.800px] font-bold text-[#666] leading-[34px]">Shared Folders</span>
              <div className="ml-auto mb-[6px] w-[84px] h-[27px] border-2 border-[#fbcc20] p-[2px] bg-white">
                <div className="h-full bg-[#fbab0c] flex items-center justify-center text-white font-bold text-[17px] pt-[1px]">HELP</div>
              </div>
            </div>

            <div className="ml-[35px] mt-[25px]">
              <div className="flex items-center h-[27px] border-b border-b-[#c8ccd2]">
                <Bullet className="w-[11px] h-[11px] mb-[6px]" />
                <span className="ml-[9px] pt-[5px] text-[19.800px] font-bold text-[#666]">Edit Shared Folder</span>
              </div>
              <div className="pl-[40px] pt-[17px] flex flex-col gap-[17px]">
                <FormRow label="Shared Folder Name" tall>
                  <div className="ml-[9px] w-[203px] h-[25px] border border-[#7f8da0] text-[16px] text-[#333] pl-[3px] leading-[24px]">bt</div>
                </FormRow>
                <FormRow label="Shared Folder Description" tall>
                  <div className="ml-[9px] w-[363px] h-[25px] border border-[#7f8da0]" />
                </FormRow>
                <FormRow label="Volume"><span className="ml-[19px] text-[16px] text-[#808080]">Disk 1</span></FormRow>
                <FormRow label="Shared Folder Support">
                  <div className="ml-[23px] flex items-center text-[16.300px] text-[#808080]">
                    <Check on /><span className="ml-[3px] mr-[14px]">Windows</span>
                    <Check /><span className="ml-[3px] mr-[15px]">Apple</span>
                    <Check /><span className="ml-[3px] mr-[14px]">FTP</span>
                    <Check on /><span className="ml-[2px]">Disk Backup</span>
                  </div>
                </FormRow>
                <FormRow label="Shared Folder Attributes">
                  <div className="ml-[23px] flex items-center text-[16.200px] text-[#808080]">
                    <Radio /><span className="ml-[3px] mr-[14px]">Read Only</span>
                    <Radio on /><span className="ml-[3px]">Read / Write</span>
                  </div>
                </FormRow>
                <FormRow label="Recycle Bin">
                  <div className="ml-[23px] flex items-center text-[16.200px] text-[#808080]">
                    <Radio /><span className="ml-[3px] mr-[14px]">Enable</span>
                    <Radio on /><span className="ml-[3px]">Disable</span>
                  </div>
                </FormRow>
                <FormRow label="Remote Backup Password" tall>
                  <div className="ml-[9px] w-[123px] h-[25px] border border-[#7f8da0]" />
                </FormRow>
              </div>
            </div>

            <div className="ml-[35px] mt-[55px]">
              <div className="flex items-center h-[27px] border-b border-b-[#c8ccd2]">
                <Bullet className="w-[11px] h-[11px] mb-[6px]" />
                <span className="ml-[9px] pt-[5px] text-[19.800px] font-bold text-[#666]">Access Restrictions</span>
              </div>
              <div className="pl-[40px] pt-[20px]">
                <div className="flex items-start">
                  <div className="w-[228px] h-[23px] border-b border-dashed border-b-[#c4c4c4] relative text-[#808080] text-[16.400px] leading-[18px]">
                    Access Restrictions
                    <div className="absolute right-0 top-0 h-[23px] border-r border-dashed border-r-[#c4c4c4]" />
                  </div>
                  <div className="ml-[5px] flex-1 h-[23px] border-b border-dashed border-b-[#c4c4c4] flex items-center pl-[23px] text-[16.200px] text-[#808080]">
                    <Radio /><span className="ml-[3px] mr-[14px]">Enable</span>
                    <Radio on /><span className="ml-[3px]">Disable</span>
                  </div>
                </div>
                <div className="h-[43px] border-b border-b-[#c4c4c4] relative text-[#808080] text-[16.400px] flex items-end">
                  <span className="ml-[73px] w-[196px]">Read / Write</span>
                  <span className="w-[196px]">Read Only</span>
                  <span>All Groups / Users</span>
                </div>
                <div className="flex items-start mt-[20px] text-[16.400px] text-[#808080]">
                  <div className="w-[68px] shrink-0 leading-[18px]">Group</div>
                  <PageSelect />
                  <div className="ml-[31px]"><MoveBtns /></div>
                  <div className="ml-[8px]"><PageSelect /></div>
                  <div className="ml-[31px]"><MoveBtns /></div>
                  <div className="ml-[8px]"><PageSelect items={['admin', 'guest', 'hdusers', '--------']} /></div>
                </div>
              </div>
            </div>
          </div>
        </div>
      </div>

      <div className="w-[20px] shrink-0 bg-[#f4f2e8] flex flex-col pt-[2px]">
        <div className="h-[20px] rounded-[2px] bg-linear-to-b from-[#e0e9fd] to-[#b9cdf8] border border-white flex items-center justify-center">
          <svg viewBox="0 0 10 6" className="w-[10px] h-[6px]"><path d="M1 5l4-4 4 4" fill="none" stroke="#4d6185" strokeWidth="2" /></svg>
        </div>
        <div className="mt-[35px] h-[556px] rounded-[2px] bg-linear-to-r from-[#cad9fb] to-[#b8ccf8] border border-[#e8eefc] flex items-center justify-center">
          <div className="w-[7px] h-[7px] border-y-2 border-y-[#e4ebfc]" />
        </div>
      </div>
    </div>
  </div>
);

export default function App() {
  return (
    <div className="relative w-[1557px] h-[884px] overflow-hidden bg-[#004e98]">
      {/* bits of desktop icons above the left window */}
      <div className="absolute left-[25px] top-0 w-[28px] h-[3px] bg-[#d8e4f8]" />
      <div className="absolute left-[125px] top-0 w-[22px] h-[3px] bg-[#e8e8e8]" />
      <div className="absolute left-[220px] top-0 w-[25px] h-[3px] bg-[#6a4a30]" />
      <div className="absolute left-[320px] top-0 w-[25px] h-[3px] bg-[#d04040]" />
      <div className={`absolute left-0 top-[854px] h-[18px] w-[90px] overflow-hidden text-[13px] text-[#dfe8f4] pt-[1px] ${MONO}`}>of Sony...</div>
      <TransmissionWindow />
      <IeWindow />
      {/* NAS1.cn watermark */}
      <svg viewBox="0 0 60 60" className="absolute left-[1414px] top-[826px] w-[60px] h-[60px]">
        <path d="M18 0c12 8 28 14 38 30-12-10-24-18-36-24z" fill="#b8a890" opacity="0.6" />
        <path d="M22 10C8 12 1 24 4 38c3-9 6-16 18-20z" fill="#808080" />
        <circle cx="23" cy="25" r="3.500" fill="#f8d018" />
        <path d="M32 14c8 14 2 32-28 42 4 4 14 6 24 0 10-7 14-28 4-42z" fill="#f59b14" />
      </svg>
      <div className={`absolute left-[1456px] top-[845px] text-[24px] leading-[28px] tracking-[-1px] font-bold text-[#3d2a1a] ${SANS}`}>NAS1.cn</div>
    </div>
  );
}
